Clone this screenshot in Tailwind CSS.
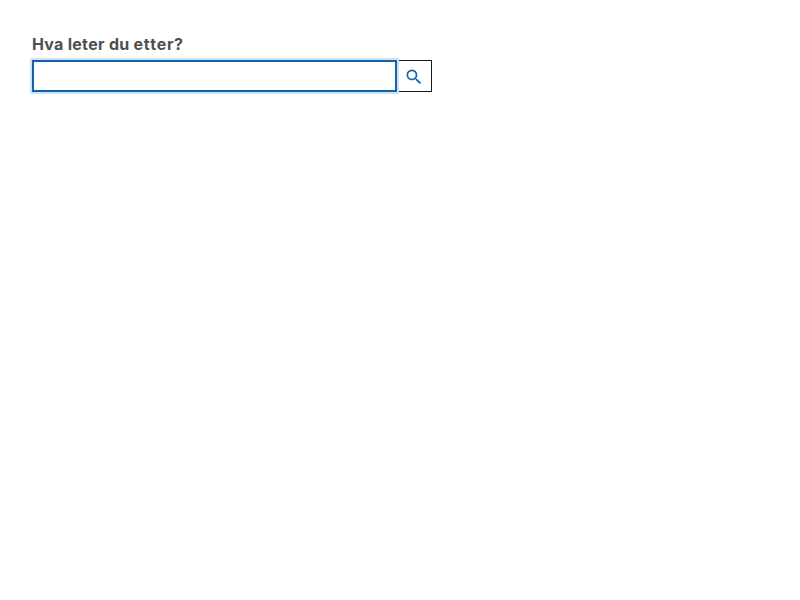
<!DOCTYPE html>
<html lang="nb">
<head>
<meta charset="utf-8">
<title>Søk</title>
<script src="https://cdn.jsdelivr.net/npm/@tailwindcss/browser@4"></script>
</head>
<body class="bg-white p-8 font-['Inter',sans-serif]">
<form class="w-[400px]">
  <label for="q" class="block h-7 pb-1 text-base leading-6 font-bold tracking-[0.27px] text-[#4f4f4f] [font-kerning:none]">Hva leter du <span class="tracking-[0.65px]">etter?</span></label>
  <div class="flex h-8">
    <input id="q" type="text" class="relative h-8 w-[365px] border-2 border-[#1362ae] bg-white px-2 shadow-[0_0_0_2px_#cfe3f7] outline-none">
    <button type="button" aria-label="Søk" class="flex h-8 w-[35px] items-center justify-center border border-l-0 border-[#16181d] bg-white pt-0.5 text-[#1362ae]">
      <svg class="size-5" viewBox="0 0 24 24" fill="currentColor"><path d="M15.500 14h-.79l-.28-.27A6.470 6.470 0 0 0 16 9.500 6.500 6.500 0 1 0 9.500 16c1.610 0 3.090-.59 4.230-1.570l.27.28v.79l5 4.990L20.490 19l-4.990-5zm-6 0C7.010 14 5 11.990 5 9.500S7.010 5 9.500 5 14 7.010 14 9.500 11.990 14 9.500 14z"/></svg>
    </button>
  </div>
</form>
</body>
</html>
